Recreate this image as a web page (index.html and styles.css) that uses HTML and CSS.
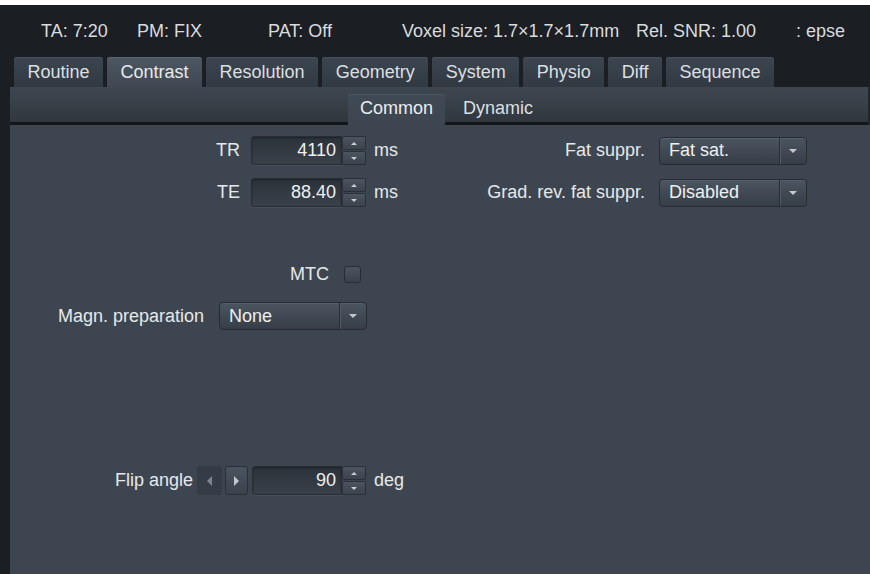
FILE: index.html
```html
<!DOCTYPE html>
<html lang="en">
<head>
<meta charset="utf-8">
<title>Contrast</title>
<link rel="stylesheet" href="styles.css">
</head>
<body>
<div class="app">
  <div class="status">
    <span class="st st-ta">TA: 7:20</span>
    <span class="st st-pm">PM: FIX</span>
    <span class="st st-pat">PAT: Off</span>
    <span class="st st-vox">Voxel size: 1.7×1.7×1.7mm</span>
    <span class="st st-snr">Rel. SNR: 1.00</span>
    <span class="st">: epse</span>
  </div>
  <div class="frame">
    <div class="tabs">
      <div class="tab">Routine</div>
      <div class="tab active">Contrast</div>
      <div class="tab">Resolution</div>
      <div class="tab">Geometry</div>
      <div class="tab">System</div>
      <div class="tab">Physio</div>
      <div class="tab">Diff</div>
      <div class="tab">Sequence</div>
    </div>
    <div class="subtabs">
      <div class="subtab active">Common</div>
      <div class="subtab">Dynamic</div>
    </div>
    <div class="panel">
      <div class="col col-left">
        <div class="row row-first">
          <span class="lbl w-tr">TR</span>
          <div class="spin">
            <div class="spin-field">4110</div>
            <div class="spin-btns"><span class="spin-btn"><i class="tri-up"></i></span><span class="spin-btn"><i class="tri-down"></i></span></div>
          </div>
          <span class="unit">ms</span>
        </div>
        <div class="row row-next">
          <span class="lbl w-tr">TE</span>
          <div class="spin">
            <div class="spin-field">88.40</div>
            <div class="spin-btns"><span class="spin-btn"><i class="tri-up"></i></span><span class="spin-btn"><i class="tri-down"></i></span></div>
          </div>
          <span class="unit">ms</span>
        </div>
        <div class="row row-mtc">
          <span class="lbl w-mtc">MTC</span>
          <span class="check"></span>
        </div>
        <div class="row row-magn">
          <span class="lbl w-magn">Magn. preparation</span>
          <div class="combo">
            <span class="combo-text">None</span>
            <span class="combo-arrow"><i class="tri-down big"></i></span>
          </div>
        </div>
        <div class="row row-flip">
          <span class="lbl w-flip">Flip angle</span>
          <span class="step step-l"><i class="tri-left"></i></span>
          <span class="step step-r"><i class="tri-right"></i></span>
          <div class="spin spin-flip">
            <div class="spin-field">90</div>
            <div class="spin-btns"><span class="spin-btn"><i class="tri-up"></i></span><span class="spin-btn"><i class="tri-down"></i></span></div>
          </div>
          <span class="unit">deg</span>
        </div>
      </div>
      <div class="col col-right">
        <div class="row row-first">
          <span class="lbl w-right">Fat suppr.</span>
          <div class="combo">
            <span class="combo-text">Fat sat.</span>
            <span class="combo-arrow"><i class="tri-down big"></i></span>
          </div>
        </div>
        <div class="row row-next">
          <span class="lbl w-right">Grad. rev. fat suppr.</span>
          <div class="combo">
            <span class="combo-text">Disabled</span>
            <span class="combo-arrow"><i class="tri-down big"></i></span>
          </div>
        </div>
      </div>
    </div>
  </div>
</div>
</body>
</html>
```

FILE: styles.css
```css
html, body {
  margin: 0;
  padding: 0;
  background: #ffffff;
}

body {
  width: 870px;
  height: 574px;
  overflow: hidden;
  font-family: "Liberation Sans", Arial, sans-serif;
  font-size: 18px;
  color: #e4e6e8;
}

.app {
  margin-top: 5px;
  height: 569px;
  background: #1b1f23;
  display: flex;
  flex-direction: column;
}

/* status line */
.status {
  height: 52px;
  display: flex;
  align-items: center;
  padding-left: 41px;
  color: #d9dbdd;
  white-space: nowrap;
}
.st-ta { width: 96px; }
.st-pm { width: 131px; }
.st-pat { width: 134px; }
.st-vox { width: 234px; }
.st-snr { width: 160px; }

.frame {
  margin-left: 10px;
  flex: 1;
  display: flex;
  flex-direction: column;
}

/* main tabs */
.tabs {
  height: 30px;
  display: flex;
  gap: 4px;
  padding-left: 4px;
  position: relative;
  z-index: 1;
}
.tab {
  height: 30px;
  box-sizing: border-box;
  padding: 0 13.5px;
  display: flex;
  align-items: center;
  border-radius: 3px 3px 0 0;
  background: linear-gradient(#3c4650, #313941);
  box-shadow: inset 0 1px 0 #46505a;
  color: #dcdfe2;
}
.tab.active {
  background: linear-gradient(#4d5762, #3f4852);
  box-shadow: inset 0 1px 0 #5a646f;
  color: #e8eaec;
}

/* sub tabs */
.subtabs {
  height: 38px;
  display: flex;
  align-items: flex-end;
  padding-left: 338px;
  gap: 4px;
  background: linear-gradient(#3e4750 0, #30373e 35px, #14181b 35px, #14181b 38px);
  box-shadow: inset -2px 0 0 #22272c;
}
.subtab {
  height: 31px;
  box-sizing: border-box;
  padding: 0 14px 3px;
  display: flex;
  align-items: center;
  color: #dcdfe2;
}
.subtab.active {
  padding: 0 12px 3px;
  border-radius: 3px 3px 0 0;
  background: linear-gradient(#404a54, #3d4650);
  box-shadow: inset 0 1px 0 #4b5560;
  color: #eceef0;
}

/* content */
.panel {
  flex: 1;
  background: #3d4650;
  display: flex;
  padding-top: 11px;
}
.col {
  display: flex;
  flex-direction: column;
}
.col-left { width: 440px; }
.col-right { flex: 1; }

.row {
  display: flex;
  align-items: center;
  height: 29px;
}
.row-next { margin-top: 13px; }
.row-mtc { margin-top: 59px; height: 17px; }
.row-magn { margin-top: 19px; height: 28px; }
.row-flip { margin-top: 136px; }

.lbl {
  text-align: right;
  white-space: nowrap;
  color: #e6e8ea;
}
.w-tr { width: 230px; margin-right: 11px; }
.w-mtc { width: 319px; margin-right: 15px; }
.w-magn { width: 194px; margin-right: 15px; }
.w-flip { width: 183px; margin-right: 4px; }
.w-right { width: 195px; margin-right: 14px; }

.unit {
  margin-left: 8px;
  color: #e6e8ea;
}

/* spin box */
.spin {
  display: flex;
  height: 29px;
  width: 115px;
}
.spin-field {
  flex: 1;
  box-sizing: border-box;
  border: 1px solid #272d33;
  border-radius: 3px 0 0 3px;
  background: linear-gradient(#2b3239, #39414a);
  box-shadow: inset 0 1px 2px rgba(0, 0, 0, 0.35), 0 1px 0 #46505a;
  padding-right: 5px;
  display: flex;
  align-items: center;
  justify-content: flex-end;
  color: #eef0f2;
}
.spin-btns {
  width: 24px;
  display: flex;
  flex-direction: column;
  gap: 1px;
}
.spin-btn {
  flex: 1;
  box-sizing: border-box;
  border: 1px solid #2a3036;
  border-radius: 2px;
  background: linear-gradient(#4b5560, #3b434c);
  display: flex;
  align-items: center;
  justify-content: center;
}
.spin-flip { width: 114px; }

/* small arrow glyphs */
.tri-up, .tri-down, .tri-left, .tri-right {
  display: block;
  width: 0;
  height: 0;
}
.tri-up {
  border-left: 3px solid transparent;
  border-right: 3px solid transparent;
  border-bottom: 3px solid #c9cdd1;
}
.tri-down {
  border-left: 3px solid transparent;
  border-right: 3px solid transparent;
  border-top: 3px solid #c9cdd1;
}
.tri-down.big {
  border-left-width: 4px;
  border-right-width: 4px;
  border-top: 4px solid #c4c8cc;
}
.tri-left {
  border-top: 5px solid transparent;
  border-bottom: 5px solid transparent;
  border-right: 5px solid #7c848c;
}
.tri-right {
  border-top: 5px solid transparent;
  border-bottom: 5px solid transparent;
  border-left: 5px solid #c3c8cd;
}

/* combo box */
.combo {
  width: 148px;
  height: 28px;
  box-sizing: border-box;
  border: 1px solid #262c32;
  border-radius: 4px;
  background: linear-gradient(#4b5560, #363e47);
  box-shadow: inset 0 1px 0 #56606b;
  display: flex;
}
.combo-text {
  flex: 1;
  padding-left: 9px;
  display: flex;
  align-items: center;
  color: #eef0f2;
}
.combo-arrow {
  width: 26px;
  border-left: 1px solid #2a3037;
  box-shadow: inset 1px 0 0 #4f5964;
  display: flex;
  align-items: center;
  justify-content: center;
}

/* check box */
.check {
  width: 17px;
  height: 17px;
  box-sizing: border-box;
  border: 1px solid #272d33;
  border-radius: 3px;
  background: linear-gradient(#4b5560, #39414a);
}

/* flip angle step buttons */
.step {
  height: 29px;
  box-sizing: border-box;
  border-radius: 3px;
  display: flex;
  align-items: center;
  justify-content: center;
}
.step-l {
  width: 25px;
  background: #343c45;
  margin-right: 3px;
}
.step-r {
  width: 23px;
  border: 1px solid #2a3036;
  background: linear-gradient(#4a545f, #3a424b);
  margin-right: 4px;
}
```
